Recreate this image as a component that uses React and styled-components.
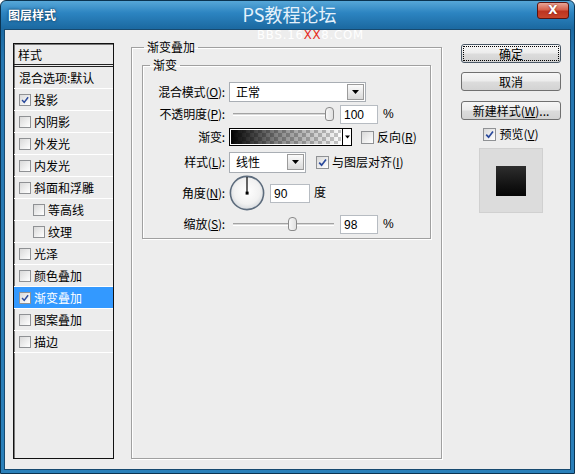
import React from 'react';
import styled, { createGlobalStyle } from 'styled-components';

const GlobalStyle = createGlobalStyle`
  * { box-sizing: border-box; }
  body {
    margin: 0;
    background: #fff;
    font-family: "Noto Sans CJK SC", "Noto Sans", sans-serif;
    font-size: 12px;
    line-height: 16px;
    color: #000;
  }
`;

const layers = [
  { label: '投影', checked: true },
  { label: '内阴影' },
  { label: '外发光' },
  { label: '内发光' },
  { label: '斜面和浮雕' },
  { label: '等高线', indent: true },
  { label: '纹理', indent: true },
  { label: '光泽' },
  { label: '颜色叠加' },
  { label: '渐变叠加', checked: true, active: true },
  { label: '图案叠加' },
  { label: '描边' },
];

const CheckBox = ({ checked, size = 13 }) => (
  <Box $size={size}>
    {checked && (
      <svg width={size - 4} height={size - 4} viewBox="0 0 9 9">
        <path d="M1.2 4.6 L3.6 7.2 L8 1.4" stroke="#2b4a9c" strokeWidth="1.7" fill="none" />
      </svg>
    )}
  </Box>
);

const DownArrow = ({ w = 7 }) => (
  <svg width={w} height="4" viewBox="0 0 7 4">
    <path d="M0 0 L7 0 L3.5 4 Z" fill="#000" />
  </svg>
);

const Slider = ({ pos }) => (
  <SliderWrap>
    <Track />
    <Thumb style={{ left: Math.round(pos * 92) }} />
  </SliderWrap>
);

const Dial = () => (
  <svg width="36" height="36" viewBox="0 0 36 36">
    <defs>
      <radialGradient id="dialFill" cx="50%" cy="45%" r="55%">
        <stop offset="0" stopColor="#ffffff" />
        <stop offset="0.7" stopColor="#f1f1f1" />
        <stop offset="1" stopColor="#d6dade" />
      </radialGradient>
    </defs>
    <circle cx="18" cy="18" r="16.6" fill="url(#dialFill)" stroke="#5d6c7d" strokeWidth="1.6" />
    <line x1="18" y1="18" x2="18" y2="2" stroke="#000" strokeWidth="1.2" />
    <rect x="16.6" y="16.6" width="3" height="3" fill="#000" />
  </svg>
);

const App = () => {
  return (
    <Window>
      <GlobalStyle />
      <TitleBar>
        <Title>图层样式</Title>
        <Brand>PS教程论坛</Brand>
        <CloseButton>X</CloseButton>
      </TitleBar>
      <Watermark>BBS.16<Red>XX</Red>8.COM</Watermark>

      <Body>
        <Sidebar>
          <ListHeader>样式</ListHeader>
          <ListRow>混合选项:默认</ListRow>
          {layers.map((l) => (
            <ListRow key={l.label} $indent={l.indent} $active={l.active}>
              <CheckBox checked={l.checked} size={12} />
              <span>{l.label}</span>
            </ListRow>
          ))}
        </Sidebar>

        <MainGroup>
          <Legend $outer>渐变叠加</Legend>
          <InnerGroup>
            <Legend>渐变</Legend>

            <Row $h={20}>
              <Label>混合模式(<u>O</u>):</Label>
              <Select $w={137}>
                <SelectText>正常</SelectText>
                <DropButton><DownArrow /></DropButton>
              </Select>
            </Row>

            <Row $h={20} $mt={2}>
              <Label>不透明度(<u>P</u>):</Label>
              <Slider pos={1} />
              <NumInput>100</NumInput>
              <Unit>%</Unit>
            </Row>

            <Row $h={20} $mt={3}>
              <Label>渐变:</Label>
              <Swatch />
              <SwatchArrow><DownArrow w={5} /></SwatchArrow>
              <CheckLabel $ml={9}>
                <CheckBox />
                <span>反向(<u>R</u>)</span>
              </CheckLabel>
            </Row>

            <Row $h={22} $mt={4}>
              <Label>样式(<u>L</u>):</Label>
              <Select $w={77} $h={21}>
                <SelectText>线性</SelectText>
                <DropButton><DownArrow /></DropButton>
              </Select>
              <CheckLabel $ml={10}>
                <CheckBox checked />
                <span>与图层对齐(<u>I</u>)</span>
              </CheckLabel>
            </Row>

            <Row $h={36} $mt={2}>
              <Label>角度(<u>N</u>):</Label>
              <Dial />
              <NumInput $w={40} $ml={5}>90</NumInput>
              <Unit $ml={4}>度</Unit>
            </Row>

            <Row $h={20} $mt={3}>
              <Label>缩放(<u>S</u>):</Label>
              <Slider pos={0.6} />
              <NumInput>98</NumInput>
              <Unit>%</Unit>
            </Row>
          </InnerGroup>
        </MainGroup>

        <Actions>
          <Button $default>确定</Button>
          <Button $mt={9}>取消</Button>
          <Button $mt={10}>新建样式(<u>W</u>)...</Button>
          <PreviewToggle>
            <CheckBox checked />
            <span>预览(<u>V</u>)</span>
          </PreviewToggle>
          <PreviewBox>
            <PreviewSquare />
          </PreviewBox>
        </Actions>
      </Body>
    </Window>
  );
};

const Window = styled.div`
  position: relative;
  width: 575px;
  height: 474px;
  display: flex;
  flex-direction: column;
  border: 1px solid #0b3350;
  border-radius: 6px 6px 0 0;
  padding: 0 3px 3px;
  background: linear-gradient(180deg, #57a7d8 0, #2c84c1 12px, #1c6aa2 27px, #2677b1 60px, #2a80ba 100%);
  overflow: hidden;
`;

const TitleBar = styled.div`
  height: 28px;
  display: grid;
  grid-template-columns: 1fr auto 1fr;
  align-items: start;
  padding: 0 2px 0 4px;
`;

const Title = styled.div`
  margin-top: 6px;
  color: #fff;
  font-weight: bold;
  font-size: 12px;
  text-shadow: 0 0 3px #0b3a5e, 0 0 1px #0b3a5e;
`;

const Brand = styled.div`
  margin: 3px 0 0 2px;
  color: #e4f1fb;
  font-size: 18px;
  line-height: 20px;
`;

const CloseButton = styled.div`
  justify-self: end;
  margin-top: 1px;
  width: 32px;
  height: 17px;
  border: 1px solid #5a1410;
  border-radius: 3px;
  background: linear-gradient(180deg, #e9a596 0, #d6614c 45%, #bd3420 55%, #c8452c 100%);
  color: #fff;
  font-family: "DejaVu Sans", sans-serif;
  font-weight: bold;
  font-size: 12px;
  line-height: 15px;
  text-align: center;
  text-shadow: 0 0 2px #6b150c;
`;

const Watermark = styled.div`
  position: absolute;
  top: 28px;
  left: 256px;
  font-family: "DejaVu Sans Condensed", "DejaVu Sans", sans-serif;
  font-size: 13px;
  line-height: 12px;
  letter-spacing: 0.8px;
  color: #fff;
  z-index: 2;
`;

const Red = styled.span`
  color: #e52a22;
`;

const Body = styled.div`
  flex: 1;
  display: flex;
  align-items: flex-start;
  border: 1px solid #174a70;
  background: #ededed;
  padding: 9px 0 0 8px;
`;

const Sidebar = styled.div`
  margin-top: 4px;
  width: 101px;
  height: 416px;
  border: 1px solid #111;
  box-shadow: inset 1px 1px 0 #7a7a7a;
  background: #ececec;
`;

const ListHeader = styled.div`
  height: 23px;
  padding: 3px 0 0 4px;
  border-bottom: 3px double #222;
`;

const ListRow = styled.div`
  height: 22px;
  display: flex;
  align-items: center;
  gap: 3px;
  padding-left: ${(p) => (p.$indent ? 19 : 5)}px;
  border-bottom: 1px solid #fff;
  background: ${(p) => (p.$active ? '#3399ff' : 'transparent')};
  color: ${(p) => (p.$active ? '#fff' : '#000')};
  white-space: nowrap;
`;

const Box = styled.span`
  width: ${(p) => p.$size}px;
  height: ${(p) => p.$size}px;
  flex-shrink: 0;
  display: inline-flex;
  align-items: center;
  justify-content: center;
  border: 1px solid #8f9194;
  background: linear-gradient(135deg, #d9d9d9 0, #f0f0f0 60%, #fff 100%);
`;

const MainGroup = styled.fieldset`
  margin: 0 0 0 17px;
  min-width: 0;
  width: 311px;
  height: 420px;
  padding: 0 10px;
  border: 1px solid #a0a0a0;
  box-shadow: 1px 1px 0 #fff, inset 1px 1px 0 #fff;
`;

const Legend = styled.legend`
  padding: 0 3px;
  margin-left: ${(p) => (p.$outer ? 2 : -3)}px;
  line-height: 16px;
`;

const InnerGroup = styled.fieldset`
  margin: 2px 0 0;
  min-width: 0;
  padding: 9px 10px 4px;
  border: 1px solid #a0a0a0;
  box-shadow: 1px 1px 0 #fff, inset 1px 1px 0 #fff;
`;

const Row = styled.div`
  display: flex;
  align-items: center;
  height: ${(p) => p.$h}px;
  margin-top: ${(p) => p.$mt || 0}px;
  white-space: nowrap;
`;

const Label = styled.div`
  width: 72px;
  margin-right: 4px;
  flex-shrink: 0;
  text-align: right;
  letter-spacing: -0.2px;
`;

const Select = styled.div`
  width: ${(p) => p.$w}px;
  height: ${(p) => p.$h || 20}px;
  display: flex;
  align-items: center;
  justify-content: space-between;
  padding: 0 1px 0 6px;
  border: 1px solid #a9aeb4;
  background: #fff;
`;

const SelectText = styled.span``;

const DropButton = styled.div`
  width: 17px;
  height: 16px;
  display: flex;
  align-items: center;
  justify-content: center;
  border: 1px solid #9b9b9b;
  background: linear-gradient(180deg, #fbfbfb, #dadada);
`;

const SliderWrap = styled.div`
  position: relative;
  width: 101px;
  height: 14px;
  margin-left: 4px;
  display: flex;
  align-items: center;
`;

const Track = styled.div`
  width: 100%;
  height: 3px;
  border-top: 1px solid #a3a3a3;
  border-bottom: 1px solid #fff;
  background: #d9d9d9;
`;

const Thumb = styled.div`
  position: absolute;
  top: 0;
  width: 9px;
  height: 14px;
  border: 1px solid #8a8a8a;
  border-radius: 4px 4px 3px 3px;
  background: linear-gradient(90deg, #f7f7f7, #e1e1e1);
`;

const NumInput = styled.div`
  width: ${(p) => p.$w || 38}px;
  height: 19px;
  margin-left: ${(p) => p.$ml ?? 6}px;
  padding: 1px 0 0 3px;
  border: 1px solid #b7bcc2;
  background: #fff;
  font-family: "Liberation Sans", Arial, sans-serif;
  font-size: 12px;
`;

const Unit = styled.span`
  margin-left: ${(p) => p.$ml ?? 5}px;
  font-family: "Liberation Sans", "Noto Sans CJK SC", sans-serif;
`;

const Swatch = styled.div`
  width: 114px;
  height: 18px;
  border: 1px solid #000;
  background:
    linear-gradient(90deg, #000 0, rgba(0, 0, 0, 0.45) 45%, rgba(0, 0, 0, 0) 100%),
    repeating-conic-gradient(#c8c8c8 0 25%, #fff 0 50%) 0 0 / 8px 8px;
  box-shadow: inset 0 0 0 1px #fff;
`;

const SwatchArrow = styled.div`
  width: 9px;
  height: 18px;
  display: flex;
  align-items: center;
  justify-content: center;
  border: 1px solid #000;
  border-left: none;
  background: #fff;
`;

const CheckLabel = styled.div`
  display: flex;
  align-items: center;
  gap: 3px;
  margin-left: ${(p) => p.$ml}px;
`;

const Actions = styled.div`
  margin: 5px 0 0 19px;
  width: 100px;
  display: flex;
  flex-direction: column;
  align-items: center;
`;

const Button = styled.div`
  width: 100px;
  height: 19px;
  margin-top: ${(p) => p.$mt || 0}px;
  border: 1px solid ${(p) => (p.$default ? '#4a5866' : '#707070')};
  border-radius: 3px;
  background: linear-gradient(180deg, #f6f6f6 0, #ececec 48%, #dcdcdc 52%, #d3d3d3 100%);
  text-align: center;
  line-height: 17px;
  outline: ${(p) => (p.$default ? '1px dotted #000' : 'none')};
  outline-offset: -3px;
  white-space: nowrap;
`;

const PreviewToggle = styled.div`
  margin-top: 7px;
  display: flex;
  align-items: center;
  gap: 3px;
  height: 14px;
`;

const PreviewBox = styled.div`
  margin-top: 7px;
  width: 64px;
  height: 65px;
  display: flex;
  align-items: center;
  justify-content: center;
  background: #dcdcdc;
  border: 1px solid #d0d0d0;
`;

const PreviewSquare = styled.div`
  width: 30px;
  height: 30px;
  background: linear-gradient(180deg, #2e2e2e 0, #141414 60%, #050505 100%);
`;

export default App;
